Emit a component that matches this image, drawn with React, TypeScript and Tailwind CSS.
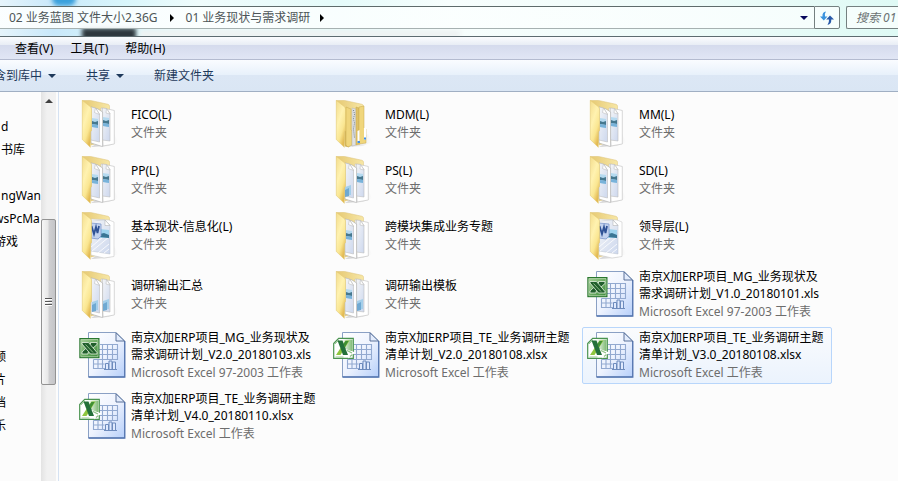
import { useId } from "react";

type Variant = "pair" | "folders" | "mixed" | "left" | "charts" | "word" | "blank";

type Item = {
  kind: "folder" | "xls" | "xlsx";
  variant?: Variant;
  lines: string[];
  type: string;
  active?: boolean;
};

const items: Item[] = [
  { kind: "folder", variant: "pair", lines: ["FICO(L)"], type: "文件夹" },
  { kind: "folder", variant: "folders", lines: ["MDM(L)"], type: "文件夹" },
  { kind: "folder", variant: "pair", lines: ["MM(L)"], type: "文件夹" },
  { kind: "folder", variant: "pair", lines: ["PP(L)"], type: "文件夹" },
  { kind: "folder", variant: "mixed", lines: ["PS(L)"], type: "文件夹" },
  { kind: "folder", variant: "pair", lines: ["SD(L)"], type: "文件夹" },
  { kind: "folder", variant: "word", lines: ["基本现状-信息化(L)"], type: "文件夹" },
  { kind: "folder", variant: "blank", lines: ["跨模块集成业务专题"], type: "文件夹" },
  { kind: "folder", variant: "word", lines: ["领导层(L)"], type: "文件夹" },
  { kind: "folder", variant: "charts", lines: ["调研输出汇总"], type: "文件夹" },
  { kind: "folder", variant: "left", lines: ["调研输出模板"], type: "文件夹" },
  {
    kind: "xls",
    lines: ["南京X加ERP项目_MG_业务现状及", "需求调研计划_V1.0_20180101.xls"],
    type: "Microsoft Excel 97-2003 工作表",
  },
  {
    kind: "xls",
    lines: ["南京X加ERP项目_MG_业务现状及", "需求调研计划_V2.0_20180103.xls"],
    type: "Microsoft Excel 97-2003 工作表",
  },
  {
    kind: "xlsx",
    lines: ["南京X加ERP项目_TE_业务调研主题", "清单计划_V2.0_20180108.xlsx"],
    type: "Microsoft Excel 工作表",
  },
  {
    kind: "xlsx",
    lines: ["南京X加ERP项目_TE_业务调研主题", "清单计划_V3.0_20180108.xlsx"],
    type: "Microsoft Excel 工作表",
    active: true,
  },
  {
    kind: "xlsx",
    lines: ["南京X加ERP项目_TE_业务调研主题", "清单计划_V4.0_20180110.xlsx"],
    type: "Microsoft Excel 工作表",
  },
];

// Right-hand ends of names that run under the left window edge.
const treeTop = [
  { name: "d", cut: false },
  { name: "书库", cut: false },
  { name: "", cut: false },
  { name: "ngWan", cut: false },
  { name: "wsPcMa", cut: true },
  { name: "游戏", cut: true },
];
const treeBottom = ["频", "片", "档", "乐"];

function Picture({ x, y }: { x: number; y: number }) {
  return (
    <g stroke="none">
      <path d={`M${x} ${y}l6 1v9l-6-1z`} fill="#b5daf0" />
      <path d={`M${x} ${y + 3}l3 1 3-1v4l-6-1z`} fill="#46788f" />
      <path d={`M${x} ${y + 6}l6 1v3l-6-1z`} fill="#79b3da" />
    </g>
  );
}

function Chart({ x, y }: { x: number; y: number }) {
  return (
    <g stroke="none">
      <path d={`M${x} ${y}l6-2v10l-6 1z`} fill="#a4cfea" />
      <path d={`M${x} ${y + 3}l4-2v8l-4 1z`} fill="#6fa9d2" />
    </g>
  );
}

function FolderIcon({ variant }: { variant: Variant }) {
  const id = useId();
  return (
    <svg viewBox="0 0 48 48" className="size-12 shrink-0" aria-hidden="true">
      <defs>
        <linearGradient id={`${id}f`} x1="0" y1="0" x2="0.6" y2="1">
          <stop offset="0" stopColor="#f3dc8c" />
          <stop offset="0.45" stopColor="#fff2b0" />
          <stop offset="0.75" stopColor="#fae691" />
          <stop offset="1" stopColor="#e3b952" />
        </linearGradient>
        <linearGradient id={`${id}b`} x1="0" y1="0" x2="1" y2="0">
          <stop offset="0" stopColor="#e6c973" />
          <stop offset="1" stopColor="#f7e7a6" />
        </linearGradient>
        <linearGradient id={`${id}p`} x1="0" y1="0" x2="1" y2="1">
          <stop offset="0" stopColor="#f4f5f7" />
          <stop offset="1" stopColor="#cdd8ee" />
        </linearGradient>
        <linearGradient id={`${id}s`} x1="0" y1="0" x2="1" y2="0">
          <stop offset="0" stopColor="#b4b4b4" />
          <stop offset="1" stopColor="#fcfcfc" />
        </linearGradient>
      </defs>
      <path d="M12 47l18-1 9-4-4-8z" fill={`url(#${id}s)`} opacity=".6" />
      <path d="M3.500.5l7-.3L29 4.300q1.500.4 1.500 2V40L12 45z" fill={`url(#${id}b)`} stroke="#dcc27a" strokeWidth=".5" />
      {variant === "folders" && (
        <g stroke="#c9a94e" strokeWidth=".5">
          <path d="M12 8l4 1v38l-4-1z" fill="#dcbf63" />
          <path d="M13 7l5 2v21l1 1v14l-4 2-2-2z" fill="#f0d67c" />
          <path d="M19 8l4 1v36l-4 1z" fill="#dfe1e3" stroke="#b4b4b4" />
          <path d="M20.500 10l1 4-1 5 1 4-1 6 1 9" fill="none" stroke="#6f7b82" strokeWidth="1" strokeDasharray="1 1" />
          <path d="M23 7l3 1v23l1 1v12l-4 1z" fill="#dfc165" />
          <path d="M26 7l5-1v22l2 1v14l-7 1z" fill="#f0d67c" />
          <path d="M24.500 31l2-1v12l-2 1zM31 28l2-1v12l-2 1z" fill="#fff" stroke="none" />
          <path d="M24.500 41h2.500v2h-2.500zM31 37.500h2v2h-2z" fill="#3f8fe8" stroke="none" />
        </g>
      )}
      {variant === "word" && (
        <g>
          <path d="M12 7l18 1 5 2v34.500l-10 1.500-13-3z" fill="#fff" stroke="#c9c9c9" strokeWidth=".6" />
          <path d="M12 9l14-1 5 5v29l-19-3z" fill={`url(#${id}p)`} stroke="#b9c0cc" strokeWidth=".5" />
          <path d="M12 35l12-10M13 39l17-14M19 41l11-9M25 41l5-4" stroke="#fff" opacity=".8" />
          <path d="M26 8l5 5.500h-5z" fill="#fff" stroke="#aaa" strokeWidth=".5" />
          <path d="M21 17l9 1v8h-9z" fill="#9fd3ee" />
          <path d="M21 22l4-1 5 2v3l-9-1z" fill="#3a7594" />
          <path d="M12 11l10 1v12l-3 3-7-1z" fill="#c2d2ef" stroke="#7f98cb" strokeWidth=".8" />
          <path d="M12.500 14l2.500 8 2-7 1.500 6 1.500-7" fill="none" stroke="#2f5296" strokeWidth="1.800" />
        </g>
      )}
      {variant !== "folders" && variant !== "word" && (
        <g stroke="#bdbdbd" strokeWidth=".6">
          <path d="M22 8l9 1.500 4.300 1V44l-11.300 2z" fill="#fff" />
          <path d="M23.500 8l4 .5 3.500 5v27.500l-7.500-1z" fill={`url(#${id}p)`} />
          <path d="M27.500 8.500l-.5 4.500 4 1z" fill="#fff" />
          <path d="M12 7l7 2 4.600 3v34.600L12 43z" fill="#fff" stroke="#a9a9a9" />
          <path d="M12 7l4.500 1 4 6v28L12 40z" fill={`url(#${id}p)`} />
          <path d="M16.500 8l-1 4.500 5 2z" fill="#fff" />
        </g>
      )}
      {variant === "pair" && <Picture x={13} y={18} />}
      {variant === "pair" && <Picture x={24} y={17} />}
      {variant === "mixed" && <Chart x={12} y={31} />}
      {variant === "mixed" && <Picture x={24} y={17} />}
      {(variant === "left" || variant === "blank") && <Picture x={13} y={18} />}
      {variant === "left" && <Chart x={24} y={30} />}
      {variant === "charts" && <Chart x={13} y={31} />}
      {variant === "charts" && <Chart x={24} y={30} />}
      <path
        d="M3.300.3l8.200 6.500q1 1 1 2.200V30.500l-1.200 1.500v15.300L3.300 39.500z"
        fill={`url(#${id}f)`}
        stroke="#e3c972"
        strokeWidth=".6"
      />
    </svg>
  );
}

function ExcelIcon({ modern }: { modern: boolean }) {
  const id = useId();
  return (
    <svg viewBox="0 0 48 48" className="size-12 shrink-0" aria-hidden="true">
      <defs>
        <linearGradient id={`${id}p`} x1="0" y1="0" x2="1" y2="1">
          <stop offset="0" stopColor="#ffffff" />
          <stop offset="0.5" stopColor="#eef3fe" />
          <stop offset="1" stopColor="#b6cffa" />
        </linearGradient>
        <linearGradient id={`${id}g`} x1="0" y1="0" x2="1" y2="1">
          <stop offset="0" stopColor="#a5cf98" />
          <stop offset="0.5" stopColor="#6fae66" />
          <stop offset="1" stopColor="#3e8b3d" />
        </linearGradient>
        <linearGradient id={`${id}m`} x1="0" y1="0" x2="1" y2="0">
          <stop offset="0" stopColor="#ffffff" />
          <stop offset="1" stopColor="#7dba72" />
        </linearGradient>
      </defs>
      <path d="M9.500.5H37l8.500 8.500v36h-36z" fill={`url(#${id}p)`} stroke="#8aa0c4" />
      <path d="M9.500 45h36.300V9" fill="none" stroke="#5274b0" strokeWidth="1.300" />
      <path d="M37 .8V9h8.500z" fill="#e3ecfc" stroke="#4c6590" strokeWidth=".9" />
      <path
        d="M21 12.500h17.500V28M19 17.500h19.500M19 22.500h19.500M14.500 27.500h24M23.500 12.500v24M28.500 12.500v15M33.500 12.500v15M14.500 27.500v9h12M14.500 32h11M19 27.500v9"
        fill="none"
        stroke="#92a9d0"
        strokeWidth="1.100"
      />
      <path d="M25 37.500h13M26.500 37v-5.500h3V37M30 37v-8h3v8M33.500 37v-7h3v7" fill="#dfe9fd" stroke="#6d8bbd" />
      {modern ? (
        <g>
          <path d="M.7 11.500l5-5.200h14.600v20H.7z" fill="#fff" stroke="#4a9350" strokeWidth="1.200" />
          <path d="M9 7.500h10.500V19H9z" fill={`url(#${id}m)`} />
          <path d="M2 12l4-4M2.500 25h8" stroke="#9ccb95" />
          <path d="M12.500 8.500h4L7.500 23H3z" fill="#8fc63f" />
          <path d="M4.500 8.500h5L15 23h-5z" fill="#24703a" />
          <path d="M12.500 9h3l-3.500 6-1.500-3z" fill="#3f8f35" />
          <path d="M12.500 17l10 3.500-7.500 6 1-3.500z" fill="#fff" />
          <path d="M14 18.500l5 2.500M17 24.500l2.500-2" stroke="#8fc186" strokeWidth="1.200" />
        </g>
      ) : (
        <g>
          <path d="M.3 6h20.200v20.200H.3z" fill="#2b7830" />
          <path d="M1.800 7.500h17.200v17.200H1.800z" fill={`url(#${id}g)`} stroke="#b7d8ad" strokeWidth=".8" />
          <g fill="#215f2c" stroke="#e8f4e3" strokeWidth=".8">
            <path d="M11.500 10.500h6.500v2l-9 8v1.500H3v-2l8.500-8z" />
            <path d="M3 10.500h6.500l8.500 10V22h-6.500L3 12z" />
          </g>
          <path d="M6.500 12.500l7.500 8" stroke="#a9d39e" strokeWidth=".8" />
        </g>
      )}
    </svg>
  );
}

function Caret({ right = false }: { right?: boolean }) {
  return (
    <svg viewBox="0 0 8 8" className="size-2" aria-hidden="true">
      <path d={right ? "M2 0l4 4-4 4z" : "M0 2h8L4 6z"} fill="currentColor" />
    </svg>
  );
}

function RefreshIcon() {
  return (
    <svg viewBox="0 0 16 16" className="size-4" aria-hidden="true">
      <path d="M7 1.500Q3 2 3.500 6.500H1l3.800 4 3.700-4H6Q5.500 3.500 7 1.500z" fill="#3b93dd" />
      <path d="M8.500 15q4-1 3.800-5.500H15l-4-4-3.800 4H10q.3 3-1.500 5.500z" fill="#2859a8" />
    </svg>
  );
}

function AddressBar() {
  return (
    <header className="relative flex h-9 shrink-0 items-start overflow-hidden bg-[linear-gradient(90deg,#e6f4fb_0,#c9e8fa_6%,#d9f6fb_14%,#effcfc_22%,#e5fbfa_38%,#f7fefd_50%,#effcfa_75%,#dffaf5_100%)] pt-1.5">
      {/* shapes of the desktop that show through the glass frame */}
      <div className="absolute -top-2 left-[52px] h-3.5 w-6 rounded-full bg-[#3aa0dc] blur-[2px]" />
      <div className="absolute top-7 left-[82px] h-3 w-[54px] bg-[#2f383e] blur-[2px]" />
      <div className="absolute top-[30px] left-[140px] h-2 w-80 bg-[#eef2f2] blur-[2px]" />
      <nav
        aria-label="Path"
        className="relative flex h-[23px] min-w-0 flex-1 items-center border-y border-t-[#5e6b6b] border-b-[#a6b1b1] bg-linear-to-r from-[#fdffff]/90 to-[#fafffe]/80 text-[#4d5557]"
      >
        <button className="pl-[9px] whitespace-nowrap">02 业务蓝图 文件大小2.36G</button>
        <span className="w-7 pl-2.5 text-black"><Caret right /></span>
        <button className="whitespace-nowrap">01 业务现状与需求调研</button>
        <span className="pl-2 text-black"><Caret right /></span>
        <button aria-label="Recent locations" className="ml-auto pr-1.5 text-[#08085c]"><Caret /></button>
      </nav>
      <button
        aria-label="Refresh"
        className="relative flex h-[23px] w-[26px] items-center justify-center rounded-r-xs border border-[#748080] bg-[#fafffe]/80"
      >
        <RefreshIcon />
      </button>
      <input
        aria-label="Search"
        placeholder="搜索 01 业务现状与需求调研"
        className="relative ml-1.5 h-[23px] w-[52px] rounded-l-xs border border-r-0 border-[#748080] bg-[#fafffe]/80 pl-[9px] italic outline-none placeholder:text-[#6b7273]"
      />
    </header>
  );
}

function Tree() {
  return (
    <aside className="flex w-[41px] shrink-0 flex-col overflow-hidden pt-[23px] text-black">
      {treeTop.map(({ name, cut }, i) =>
        name ? (
          <button key={i} className={`h-[23px] shrink-0 text-left whitespace-nowrap ${cut ? "-ml-1.5" : "pl-px"}`}>
            {name}
          </button>
        ) : (
          <div key={i} className="h-[23px] shrink-0" />
        )
      )}
      <div className="h-[92px] shrink-0" />
      {treeBottom.map((name) => (
        <button key={name} className="-ml-1.5 h-[23px] shrink-0 text-left">{name}</button>
      ))}
    </aside>
  );
}

function ScrollBar() {
  return (
    <div className="flex w-[15px] shrink-0 flex-col bg-[linear-gradient(90deg,#e3e3e3,#f1f1f1_40%,#f1f1f1)]">
      <button aria-label="Scroll up" className="flex h-[18px] items-center justify-center text-[#404040]">
        <svg viewBox="0 0 8 4" className="h-1 w-2"><path d="M4 0l4 4H0z" fill="currentColor" /></svg>
      </button>
      <div className="mt-[109px] flex h-[166px] flex-col items-center justify-center gap-px rounded-xs border border-[#929292] bg-[linear-gradient(90deg,#f6f6f6,#e8e8e8_45%,#cfcfd1_55%,#c4c5c8)]">
        <span className="h-0.5 w-[7px] border-t border-[#555] bg-white" />
        <span className="h-0.5 w-[7px] border-t border-[#555] bg-white" />
        <span className="h-0.5 w-[7px] border-t border-[#555] bg-white" />
      </div>
    </div>
  );
}

function FileTile({ item }: { item: Item }) {
  return (
    <button
      className={`flex w-full items-center gap-1 rounded-xs border pl-1 text-left ${
        item.active ? "border-[#b8d6fb] bg-linear-to-b from-[#fafbfd] to-[#ebf3fd]" : "border-transparent"
      } ${item.kind === "folder" ? "min-h-[52px]" : "min-h-[57px]"}`}
    >
      {item.kind === "folder" ? (
        <FolderIcon variant={item.variant ?? "pair"} />
      ) : (
        <ExcelIcon modern={item.kind === "xlsx"} />
      )}
      <span className="flex flex-col pb-px leading-[17px] whitespace-nowrap">
        {item.lines.map((line) => (
          <span key={line} className="text-black">{line}</span>
        ))}
        <span className="pt-px text-[#6d6d6d]">{item.type}</span>
      </span>
    </button>
  );
}

export default function App() {
  return (
    <div className="flex h-screen flex-col overflow-hidden bg-[#fcfcfc] font-['Noto_Sans','Noto_Sans_CJK_SC',sans-serif] text-[12px] leading-[17px]">
      <AddressBar />
      <nav
        aria-label="Menu"
        className="flex h-6 shrink-0 items-center gap-[17px] border-t border-b border-t-[#5d6b70] border-b-[#b4bbd0] bg-[linear-gradient(#fbfcfe_0,#e8edf5_36%,#d5dbed_38%,#e1e6f5_100%)] pl-[15px] text-black"
      >
        <button>查看(V)</button>
        <button>工具(T)</button>
        <button>帮助(H)</button>
      </nav>
      <div
        role="toolbar"
        className="flex h-8 shrink-0 items-center border-b border-[#a0afc3] bg-[linear-gradient(#fafcff_0,#e8f1fb_47%,#dce7f5_50%,#dae6f4_100%)] text-[#1e395b]"
      >
        <button className="-ml-1.5 flex items-center gap-1.5">含到库中 <Caret /></button>
        <button className="ml-[30px] flex items-center gap-1.5">共享 <Caret /></button>
        <button className="ml-[30px]">新建文件夹</button>
      </div>
      <div className="flex min-h-0 flex-1">
        <Tree />
        <ScrollBar />
        <main className="ml-0.5 min-w-0 flex-1 overflow-hidden border-l border-[#d5e2f2] pt-1.5 pl-[15px]">
          <div className="grid grid-cols-[repeat(auto-fill,250px)] gap-1">
            {items.map((item) => (
              <FileTile key={item.lines.join("")} item={item} />
            ))}
          </div>
        </main>
      </div>
    </div>
  );
}
